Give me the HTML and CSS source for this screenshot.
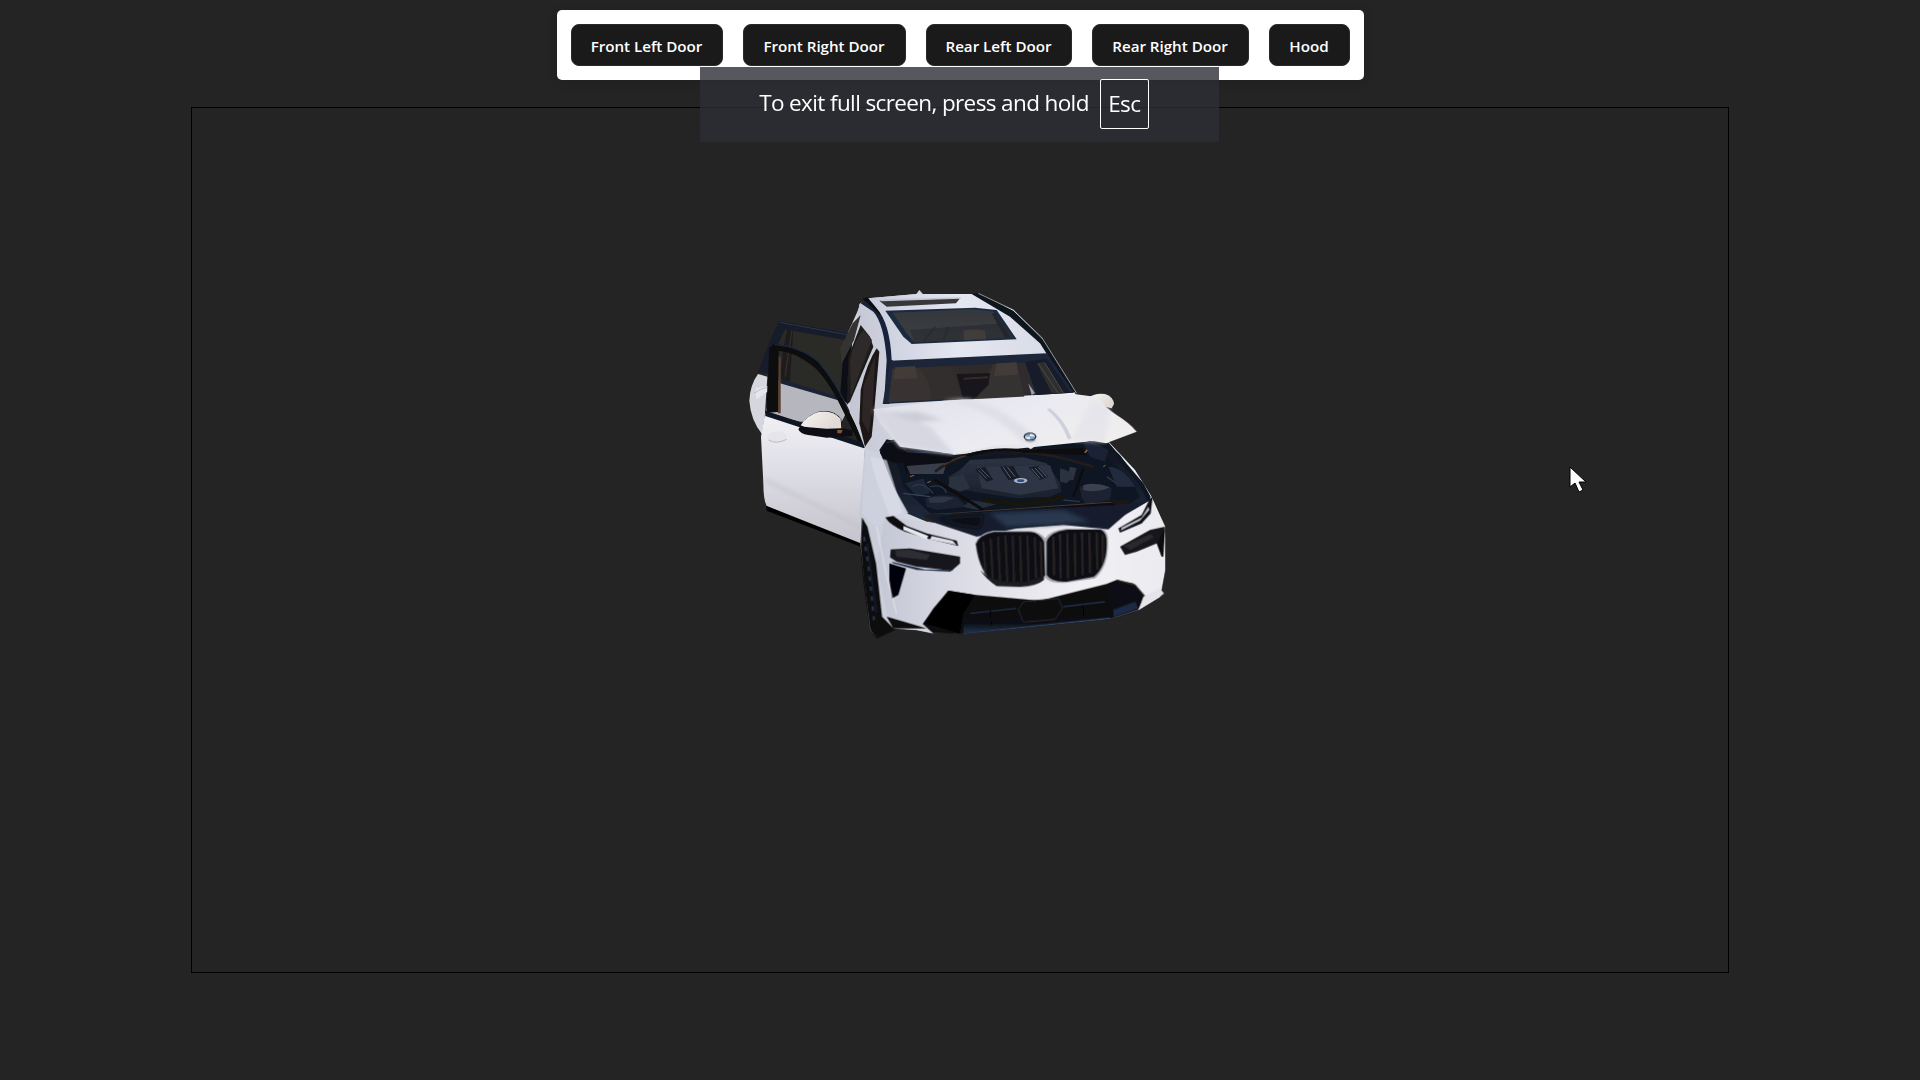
FILE: index.html
```html
<!DOCTYPE html>
<html lang="en">
<head>
<meta charset="utf-8">
<title>Car viewer</title>
<link rel="stylesheet" href="styles.css">
</head>
<body>
<div class="toolbar">
  <button class="btn w-fl">Front Left Door</button>
  <button class="btn w-fr">Front Right Door</button>
  <button class="btn w-rl">Rear Left Door</button>
  <button class="btn w-rr">Rear Right Door</button>
  <button class="btn w-h">Hood</button>
</div>
<main class="viewer">
<svg class="car" viewBox="0 0 1380 1110" xmlns="http://www.w3.org/2000/svg">
  <defs>
    <linearGradient id="doorG" x1="0" y1="0" x2="0" y2="1"><stop offset="0" stop-color="#f1f1f5"/><stop offset=".45" stop-color="#dddde5"/><stop offset="1" stop-color="#c4c2ca"/></linearGradient>
    <linearGradient id="hoodG" x1="0" y1="0" x2="1" y2=".5"><stop offset="0" stop-color="#dfe0e8"/><stop offset=".5" stop-color="#e9eaf1"/><stop offset="1" stop-color="#f0eeee"/></linearGradient>
    <linearGradient id="roofG" x1="0" y1="0" x2="1" y2="0"><stop offset="0" stop-color="#c9ccdb"/><stop offset=".5" stop-color="#e4e6f0"/><stop offset="1" stop-color="#d9dbe8"/></linearGradient>
    <linearGradient id="bodyG" x1="0" y1="0" x2="1" y2="0"><stop offset="0" stop-color="#c3c6d4"/><stop offset=".25" stop-color="#d9dae4"/><stop offset=".7" stop-color="#f1f0f4"/><stop offset="1" stop-color="#ecebef"/></linearGradient>
    <linearGradient id="sunG" x1="0" y1="0" x2="0" y2="1"><stop offset="0" stop-color="#35373b"/><stop offset="1" stop-color="#3b3e44"/></linearGradient>
    <linearGradient id="bayG" x1="0" y1="0" x2="0" y2="1"><stop offset="0" stop-color="#10141d"/><stop offset=".6" stop-color="#18202e"/><stop offset="1" stop-color="#222e42"/></linearGradient>
    <linearGradient id="engG" x1="0" y1="0" x2="0" y2="1"><stop offset="0" stop-color="#2b3343"/><stop offset="1" stop-color="#1b202c"/></linearGradient>
    <linearGradient id="glassG" x1="0" y1="0" x2="1" y2="0"><stop offset="0" stop-color="#343030"/><stop offset=".5" stop-color="#2e2b2b"/><stop offset="1" stop-color="#302e2f"/></linearGradient>
    <linearGradient id="lipG" x1="0" y1="0" x2="0" y2="1"><stop offset="0" stop-color="#0a0a0c"/><stop offset=".7" stop-color="#0e0f14"/><stop offset="1" stop-color="#22324f"/></linearGradient>
    <linearGradient id="mirrorG" x1="0" y1="0" x2="1" y2=".4"><stop offset="0" stop-color="#f6f4f2"/><stop offset="1" stop-color="#e0d9d4"/></linearGradient>
    <filter id="soft" x="-5%" y="-5%" width="110%" height="110%"><feGaussianBlur stdDeviation="1.4"/></filter>
    <filter id="soft2" x="-30%" y="-30%" width="160%" height="160%"><feGaussianBlur stdDeviation="6"/></filter>
  </defs>
  <g filter="url(#soft)">
    <path d="M84 282 L112 290 L105 400 L96 462 Q62 420 58 362 Q60 315 84 282Z" fill="#d6d6de"/>
    <path d="M78 325 L112 318 L112 335 L80 358 Q74 342 78 325Z" fill="#e6e6ec"/>
    <path d="M72 340 Q90 325 112 322" stroke="#bdbdc6" stroke-width="3" fill="none"/>
    <path d="M315 240 L345 178 L380 100 L392 70 L440 100 L470 240 L460 370 L430 400 L405 500 L340 360 L280 330 Z" fill="#d3d3dc"/>
    <path d="M290 325 Q300 230 330 182 L336 250 L322 340Z" fill="#c4c7d2"/>
    <path d="M148 125 L368 165 L352 370 L326 355 L152 300 L88 275 Z" fill="#2a2928"/>
    <path d="M172 146 L160 205 L150 300 L180 305 L190 148Z" fill="#1f1d1e"/>
    <path d="M186 150 L176 215 L165 290" stroke="#3d3028" stroke-width="3" fill="none"/>
    <path d="M148 123 L370 163 L368 184 L190 152 L165 148 L136 210 L112 282 L86 276 Q112 195 148 123Z" fill="#141b2a"/>
    <path d="M150 127 L366 167" stroke="#2b3850" stroke-width="3" fill="none"/>
    <path d="M342 190 L368 165 L360 255 L352 370 L330 352 Z" fill="#0e0e12"/>
    <path d="M150 302 L326 358 L350 395 L335 425 L210 425 L108 400 L125 290 Z" fill="#b6b6be"/>
    <path d="M150 297 L326 350 L330 362 L150 310 Z" fill="#1a2436"/>
    <path d="M118 205 L132 192 Q210 200 265 245 Q320 310 358 395 L404 490 L392 498 L335 385 Q290 290 245 255 Q190 214 146 212 L146 396 L110 398 Z" fill="#08080b"/>
    <path d="M134 194 Q210 200 265 245 Q320 310 358 395" stroke="#1a2a45" stroke-width="4" fill="none"/>
    <path d="M146 225 L152 235 L152 400 L144 400Z" fill="#5a4130"/>
    <path d="M105 400 L400 500 L405 505 L392 798 L110 678 Q100 660 100 610 L93 470Z" fill="url(#doorG)"/>
    <path d="M106 392 L405 490 L402 505 L106 408Z" fill="#101520"/>
    <path d="M113 464 Q140 444 168 462 L170 478 Q140 494 115 480Z" fill="#e4e4ea"/>
    <path d="M115 480 Q140 494 170 478" stroke="#bcbcc6" stroke-width="3" fill="none"/>
    <path d="M105 600 L390 740" stroke="#bdbbc4" stroke-width="12" fill="none" opacity=".45" filter="url(#soft2)"/>
    <path d="M108 677 L392 790 L392 800 L110 692Z" fill="#030304"/>
    <path d="M205 448 Q225 410 262 396 Q310 385 334 418 L336 445 L368 450 L368 468 L290 473 L235 465 Q210 462 205 448Z" fill="#0f0f12"/>
    <path d="M212 436 Q230 408 262 397 Q306 388 332 416 L334 445 L290 446 L236 442Q222 442 212 436Z" fill="url(#mirrorG)"/>
    <path d="M322 450 L338 450 L334 460 L322 460Z" fill="#8a5532"/>

    <path d="M388 72 L415 55 L560 42 L735 42 L850 90 L935 175 L1032 335 L1090 430 L1140 490 L1215 570 L1265 650 L1305 740 L1305 870 L1290 950 L1225 990 L1150 1015 L700 1060 L610 1060 L560 1050 L490 1045 L440 1072 L420 1050 L392 800 L388 700 L405 505 L360 390 L355 300Z" fill="url(#bodyG)"/>
    <path d="M556 46 L568 30 L582 46Z" fill="#d4d4da"/>
    <path d="M392 135 L420 170 L430 200 L360 365 L350 375 L355 230 Z" fill="#1c1a1b"/>
    <path d="M368 130 L392 105 L372 180 L336 250 L330 205 Z" fill="#363333"/>
    <path d="M400 150 L426 180 L362 350 L360 240 Q372 180 400 150Z" fill="#2f2a29"/>
    <path d="M440 205 L448 215 L432 400 L425 470 L405 500 L388 430 L392 330 Q410 250 440 205Z" fill="#1c1816"/>
    <path d="M436 225 L400 320 L396 420 L416 460 L428 380Z" fill="#2e2625"/>
    <path d="M392 70 L430 95 Q462 130 470 240 L462 372 L478 372 L488 240 Q480 120 440 85 L408 55 Z" fill="#18233a"/>
    <path d="M398 56 L414 52 L460 100 L450 105Z" fill="#0c0c10"/>
    <path d="M415 55 L560 42 L735 42 L850 90 L935 175 L955 222 L485 240 Q480 130 440 85Z" fill="url(#roofG)"/>
    <path d="M448 62 L690 55 L678 70 L470 80Z" fill="#38383a"/>
    <path d="M452 58 L692 52 L692 56 L454 64Z" fill="#c4c6d2"/>
    <path d="M466 92 L735 83 L800 90 L860 178 L545 192 L520 170Z" fill="#1e2a40"/>
    <path d="M488 98 L730 88 L790 95 L848 172 L552 186 L530 160Z" fill="url(#sunG)"/>
    <path d="M540 150 L820 130 L848 172 L552 186Z" fill="#26262a" opacity=".55"/>
    <path d="M700 152 Q735 145 765 152 L768 178 L702 180Z" fill="#413d3b"/>
    <path d="M795 100 L842 172 L825 172 L785 100Z" fill="#23252b"/>
    <path d="M580 185 L615 140 M640 180 L655 140" stroke="#2a2c31" stroke-width="5" fill="none"/>
    <path d="M725 42 L745 38 L850 92 L940 180 L1036 335 L1024 338 L930 190 L840 110Z" fill="#0f121b"/>
    <path d="M745 40 L850 90 L935 172 L1040 340" stroke="#e8e9f0" stroke-width="3" fill="none" opacity=".6"/>
    <path d="M480 242 L950 220 L1032 338 L640 362 L458 372 Z" fill="#1a2539"/>
    <path d="M486 266 L880 248 L945 238 L1022 336 L640 358 L476 366Z" fill="url(#glassG)"/>
    <path d="M490 270 L560 264 Q600 290 605 360 L475 366Z" fill="#383332"/>
    <path d="M495 262 L555 258 L562 295 L490 298Z" fill="#423b39"/>
    <path d="M575 262 L650 258 Q690 300 695 358 L605 360 Q600 300 575 262Z" fill="#322d2d"/>
    <path d="M790 252 L860 248 L885 360 L735 358Z" fill="#363232"/>
    <path d="M800 250 L860 247 L864 284 L792 288Z" fill="#423b38"/>
    <path d="M680 282 L780 280 L775 315 L730 360 L700 358 Z" fill="#14141a"/>
    <path d="M700 296 L775 292" stroke="#3a2c20" stroke-width="6" fill="none"/>
    <path d="M885 246 L950 236 L1022 338 L920 345Z" fill="#131a2a"/>
    <path d="M920 250 L945 245 L1000 338 L965 340Z" fill="#2f2d2e"/>
    <path d="M925 250 L985 340 M945 250 L1000 338" stroke="#494746" stroke-width="3" fill="none"/>
    <path d="M895 310 L915 340 L905 345Z" fill="#9ca0ac"/>
    <path d="M1078 352 Q1095 338 1125 342 Q1150 350 1152 372 L1145 385 Q1105 378 1078 352Z" fill="url(#mirrorG)"/>
  </g>

  <g filter="url(#soft)">
    <path d="M448 510 L470 478 L670 525 L1120 480 L1170 525 L1240 625 L1262 660 L1190 700 L1130 745 L1080 725 L900 740 L780 750 L680 745 L590 725 L530 700 L490 620 Z" fill="url(#bayG)"/>
    <path d="M500 540 L700 530 L1120 520 L1200 600 L1230 650 L1180 690 L600 700 L520 620Z" fill="#0f1420"/>
    <path d="M510 525 L650 525 L640 555 L530 580Z" fill="#0d1018"/>
    <path d="M530 558 L650 548 L640 582 L540 582Z" fill="#5b6272" opacity=".55"/>
    <path d="M585 655 Q620 640 680 650 L710 680 L620 690 L590 680Z" fill="#1b2230"/>
    <path d="M595 655 Q630 645 672 654 L640 668 L600 668Z" fill="#2e3646"/>
    <path d="M1050 620 Q1100 600 1145 625 L1140 660 L1070 672 Q1050 655 1050 620Z" fill="#1d2431"/>
    <path d="M1060 615 Q1100 605 1140 622 Q1100 640 1060 630Z" fill="#3a4150"/>
    <path d="M1020 560 L1040 565 L1030 600 L1010 600Z" fill="#2f3441"/>
    <path d="M1135 560 Q1180 560 1215 620 L1160 620Z" fill="#202a3f"/>
    <path d="M525 610 L580 595 L600 640 L560 650Z" fill="#1b2536"/>
    <path d="M720 660 L800 672 L740 690 L700 680Z" fill="#262d3b"/>
    <path d="M548 620 Q575 600 610 640 M600 620 Q640 610 650 640 M1000 660 L1050 665 M1130 590 L1160 610" stroke="#2c3648" stroke-width="4" fill="none"/>
    <path d="M655 590 L690 570 L720 540 L880 532 L950 550 L990 610 L995 635 L960 650 L860 655 L760 640 L700 630 L660 625Z" fill="url(#engG)"/>
    <path d="M740 560 L960 556 L985 625 L870 645 L755 625Z" fill="#2f3645"/>
    <path d="M735 568 L765 560 L790 600 L770 605Z" fill="#171c27"/>
    <path d="M745 570 L770 596 M752 566 L778 592" stroke="#4d5566" stroke-width="3" fill="none"/>
    <path d="M810 560 L850 558 L870 595 L835 600Z" fill="#171c27"/>
    <path d="M820 562 L842 594 M832 561 L855 590" stroke="#5a6273" stroke-width="3" fill="none"/>
    <path d="M895 562 L925 558 L955 590 L930 600Z" fill="#171c27"/>
    <path d="M905 566 L930 595 M915 564 L940 592 M925 562 L950 590" stroke="#58606f" stroke-width="3" fill="none"/>
    <path d="M660 592 L700 582 L720 625 L690 635 L655 620Z" fill="#2a3140"/>
    <path d="M990 565 Q1020 570 1030 590 L1010 610 L990 605Z" fill="#2a3140"/>
    <ellipse cx="872" cy="602" rx="20" ry="8" fill="#a8b5c8"/>
    <ellipse cx="872" cy="602" rx="11" ry="4" fill="#2d4e80"/>
    <path d="M760 650 Q860 680 1000 645 L1000 660 Q860 692 760 665Z" fill="#16120e"/>
    <path d="M615 575 Q700 510 820 512 Q950 515 1090 560" stroke="#221f1e" stroke-width="8" fill="none"/>
    <path d="M640 555 Q710 512 820 510" stroke="#6a482e" stroke-width="2" fill="none"/>
    <path d="M615 600 L760 690" stroke="#0a0c10" stroke-width="8" fill="none"/>
    <path d="M1060 565 L1030 650" stroke="#0a0c10" stroke-width="7" fill="none"/>
    <path d="M590 714 L1165 674" stroke="#0d0e12" stroke-width="18" fill="none"/>
    <path d="M590 705 L1165 665" stroke="#4a3a30" stroke-width="3" fill="none"/>
    <path d="M1140 662 L1195 660 L1197 680 L1165 686Z" fill="#1a1714"/>
    <path d="M582 702 L620 702 L620 724 L590 726Z" fill="#2a211c"/>
    <path d="M520 640 L600 650" stroke="#33445f" stroke-width="4" fill="none"/>
    <path d="M540 590 L552 586 M592 608 L602 604 M1120 560 L1126 556" stroke="#a36a3a" stroke-width="3" fill="none"/>
    <path d="M450 520 Q465 480 500 478 L540 510 L670 530 L660 545 L520 548 L500 550 Q460 540 450 520Z" fill="#0b0d13"/>
    <path d="M470 488 L500 482 L530 515 L670 522" stroke="#2a3650" stroke-width="3" fill="none"/>
    <path d="M700 525 Q800 495 880 510 L1060 505 L1070 525 L880 518 Q800 505 720 530Z" fill="#0c0d11"/>
    <path d="M1060 490 L1080 482 L1135 510 L1125 545 L1080 530Z" fill="#1b2336"/>
    <path d="M1072 510 L1064 518" stroke="#a36a3a" stroke-width="4" fill="none"/>
    <path d="M1135 487 L1240 610 L1262 650 L1255 665 L1225 610 L1125 495Z" fill="#0e1420"/>
  </g>

  <g filter="url(#soft)">
    <path d="M430 388 L640 362 L1032 342 L1095 350 Q1130 385 1160 405 Q1200 430 1220 455 L1128 490 L1060 478 L925 492 L902 508 L880 492 L800 496 L672 522 L510 500 L452 430Z" fill="url(#hoodG)"/>
    <g filter="url(#soft2)">
      <path d="M430 388 L452 430 L510 500 L672 522 L600 440 L500 395Z" fill="#d6d7e1"/>
      <path d="M640 362 Q780 380 880 488 L930 490 Q830 380 710 358Z" fill="#dedfe7"/>
      <path d="M1025 480 L1090 355 L1140 388 L1125 488Z" fill="#e2e3ea" opacity=".7"/>
      <path d="M480 400 L560 395 L640 420 L560 425Z" fill="#c4c6d2" opacity=".8"/>
    </g>
    <path d="M960 385 Q1005 420 1025 475 L1014 478 Q992 420 950 388Z" fill="#cdd0db"/>
    <ellipse cx="900" cy="470" rx="19" ry="12" fill="#0e1524"/>
    <path d="M884 470 a16 9 0 0 1 16 -9 v9z M900 470 h16 a16 9 0 0 1 -16 9z" fill="#7da7d6"/>
    <path d="M900 461 a16 9 0 0 1 16 9 h-16z M884 470 h16 v9 a16 9 0 0 1 -16 -9z" fill="#eef0f4"/>
    <path d="M885 480 Q900 490 917 480" stroke="#9a9ca8" stroke-width="3" fill="none"/>
  </g>

  <g filter="url(#soft)">
    <path d="M405 505 L448 520 L490 620 L535 700 L470 712 L440 745 L395 700 Z" fill="#cdd0dd"/>
    <path d="M470 540 L520 700 L480 710 Q440 620 420 530Z" fill="#dcdee8" opacity=".7"/>
    <path d="M465 710 L590 725 L780 755 L1130 745 L1265 660 L1305 740 L1305 870 L1290 950 L1225 990 L1120 905 L930 960 L730 940 L660 935 L600 1000 L580 1030 L610 1060 L560 1050 L490 1045 L470 1000 L440 850 Z" fill="url(#bodyG)"/>
    <path d="M580 705 L1165 675 L1260 660 L1185 705 L1135 748 L1000 735 L860 745 L740 770 L620 730Z" fill="#161f2e"/>
    <g filter="url(#soft2)">
      <path d="M780 700 L1000 690 L1080 725 L960 735 L830 740Z" fill="#2a3850"/>
      <path d="M620 715 L760 705 L750 745 L680 735Z" fill="#0d1119"/>
    </g>
    <path d="M466 712 L490 708 L530 738 L590 760 L680 782 L685 798 L590 775 L525 755 Q480 735 466 712Z" fill="#0a0b10"/>
    <path d="M520 738 L595 768 L590 778 L520 750Z" fill="#e8e8ee"/>
    <path d="M605 768 L668 782 L680 795 L600 778Z" fill="#dcdce4"/>
    <path d="M482 808 L540 805 L690 830 L690 850 L665 872 L560 860 L500 845 L480 832Z" fill="#16181f"/>
    <path d="M495 812 L535 808 L600 825 L590 840 L500 830Z" fill="#2d2e33"/>
    <path d="M485 845 L585 868 L670 870 L660 875 L560 870 L490 850Z" fill="#22314d"/>
    <path d="M478 850 L528 865 L505 945 L486 955 L478 900Z" fill="#060607"/>
    <path d="M1260 655 L1268 650 L1262 700 L1235 730 L1170 758 L1165 745 L1235 705Z" fill="#0e1118"/>
    <path d="M1175 742 L1235 712 L1255 680 L1258 690 L1230 722 L1172 752Z" fill="#b8bbc6"/>
    <path d="M1170 800 L1260 750 L1305 740 L1302 775 L1295 830 L1280 790 L1220 815 L1185 825Z" fill="#15171d"/>
    <path d="M1180 798 L1262 762 L1272 772 L1200 810Z" fill="#2b2929"/>
    <path d="M1282 790 L1305 745 L1300 830 L1295 830Z" fill="#07070a"/>
    <path d="M735 790 Q745 760 790 752 L900 752 Q930 755 945 775 Q960 750 1010 745 L1115 745 Q1138 755 1134 790 Q1135 860 1095 895 L1010 908 Q960 912 945 892 Q930 920 870 922 L800 920 Q745 880 735 790Z" fill="#a8a8b2"/>
    <path d="M738 792 Q748 764 792 756 L900 756 Q928 758 942 785 L945 885 Q925 915 870 918 L800 916 Q748 880 738 792Z" fill="#111114"/>
    <path d="M950 785 Q960 755 1012 749 L1112 749 Q1132 758 1130 792 Q1130 858 1092 890 L1010 905 Q965 908 950 885Z" fill="#111114"/>
    <path d="M760 785 L766 880 M782 775 L788 895 M804 770 L810 905 M826 768 L832 908 M848 768 L852 910 M870 768 L874 910 M892 768 L896 905 M914 772 L918 895 M932 785 L935 888" stroke="#2b2725" stroke-width="5" fill="none"/>
    <path d="M970 770 L972 885 M990 762 L992 895 M1012 760 L1014 895 M1034 760 L1036 890 M1056 758 L1058 885 M1078 758 L1080 880 M1100 758 L1102 868 M1118 765 L1118 850" stroke="#302926" stroke-width="5" fill="none"/>
    <path d="M750 870 Q790 912 870 906 Q920 904 940 885 L942 900 Q920 918 870 920 L800 918 Q770 900 750 870Z" fill="#1a1b20"/>
    <path d="M655 932 L735 945 L930 962 L1130 912 L1160 900 L1210 910 L1245 950 L1225 990 L1150 1015 L700 1062 L610 1060 L578 1032Z" fill="#0a0a0c"/>
    <path d="M700 1002 L870 990 L1135 965 L1150 975 L1145 1010 L700 1058Z" fill="url(#lipG)"/>
    <path d="M720 1000 L860 985 M1000 980 L1125 965" stroke="#24344f" stroke-width="4" fill="none"/>
    <path d="M700 1060 L1140 1014" stroke="#223350" stroke-width="5" fill="none"/>
    <path d="M865 990 L880 965 L985 955 L998 985 L975 1018 L880 1026Z" fill="#0c0c10" stroke="#2b2c30" stroke-width="3"/>
    <path d="M1130 915 L1160 905 L1205 918 L1240 950 L1215 985 L1150 1010Z" fill="#111114"/>
    <path d="M1160 900 L1215 915 L1245 950" stroke="#38302c" stroke-width="4" fill="none"/>
    <path d="M1150 990 L1215 965 L1225 985 L1150 1012Z" fill="#1c2a44"/>
    <path d="M655 932 L610 985 L580 1030 L620 1040 L690 1060 L700 1002 L735 945Z" fill="#050506"/>
    <path d="M780 990 L785 1035 M1058 975 L1062 1015" stroke="#050507" stroke-width="4" fill="none"/>
    <path d="M1240 950 L1290 925 L1302 940 L1290 950 L1225 990Z" fill="#e4e4ea"/>
    <path d="M396 712 L412 740 L438 850 L456 1010 L495 1050 L440 1075 L420 1050 L400 900 L392 800Z" fill="#0a0b10"/>
    <path d="M402 770 L418 880 L432 1020" stroke="#27344d" stroke-width="7" stroke-dasharray="14 16" fill="none"/>
    <path d="M412 790 L426 900 L440 1000" stroke="#161d2b" stroke-width="5" fill="none"/>
    <path d="M440 740 L470 890 L500 1000" stroke="#f5f5f8" stroke-width="5" fill="none" opacity=".35"/>
    <path d="M470 1010 L590 1045 L490 1045Z" fill="#0a0a0c"/>
  </g>
</svg>
<svg class="pointer" viewBox="0 0 18 28" xmlns="http://www.w3.org/2000/svg"><path d="M1 1 L1 21 L6 17 L10 26 L14 24 L10 16 L17 16Z" fill="#fff" stroke="#000" stroke-width="1"/></svg>
</main>
<div class="exit-toast">
  <span class="exit-text">To exit full screen, press and hold</span>
  <kbd class="key">Esc</kbd>
</div>
</body>
</html>
```
FILE: styles.css
```css
html, body { margin: 0; padding: 0; }
body {
  height: 100vh;
  overflow: hidden;
  background: #242424;
  display: flex;
  flex-direction: column;
  align-items: center;
  font-family: "Open Sans", "Noto Sans", sans-serif;
  color: #fff;
}
.toolbar {
  margin-top: 10px;
  background: #fff;
  border-radius: 5px;
  padding: 14px;
  display: flex;
  gap: 20px;
  box-shadow: 0 2px 10px rgba(0,0,0,.15);
}
.btn {
  height: 42px;
  padding: 2px 0 0;
  border: 1px solid #2a2a2a;
  border-radius: 8px;
  background: #1a1a1a;
  color: #fff;
  font: 600 15.2px "Open Sans", sans-serif;
  letter-spacing: -.03px;
  text-align: center;
}
.w-fl { width: 152px; }
.w-fr { width: 163px; }
.w-rl { width: 146px; }
.w-rr { width: 157px; }
.w-h { width: 81px; }
.viewer {
  position: relative;
  margin-top: 27px;
  width: 1536px;
  height: 864px;
  border: 1px solid #000;
}
.car {
  position: absolute;
  left: 538px;
  top: 172px;
  width: 460px;
  height: 370px;
}
.pointer {
  position: absolute;
  left: 1377px;
  top: 358px;
  width: 18px;
  height: 28px;
}
.exit-toast {
  position: fixed;
  left: 700px;
  top: 67px;
  width: 519px;
  height: 75px;
  box-sizing: border-box;
  display: flex;
  align-items: center;
  justify-content: center;
  gap: 11px;
  padding: 0 11px 2px 0;
  background: rgba(44,46,54,.8);
  font-size: 22.5px;
  letter-spacing: -.62px;
  color: #fff;
}
.exit-text { margin-top: -2px; }
.key {
  font: inherit;
  width: 49px;
  height: 50px;
  box-sizing: border-box;
  display: flex;
  align-items: center;
  justify-content: center;
  border: 1px solid #fff;
  border-radius: 2px;
}
```
